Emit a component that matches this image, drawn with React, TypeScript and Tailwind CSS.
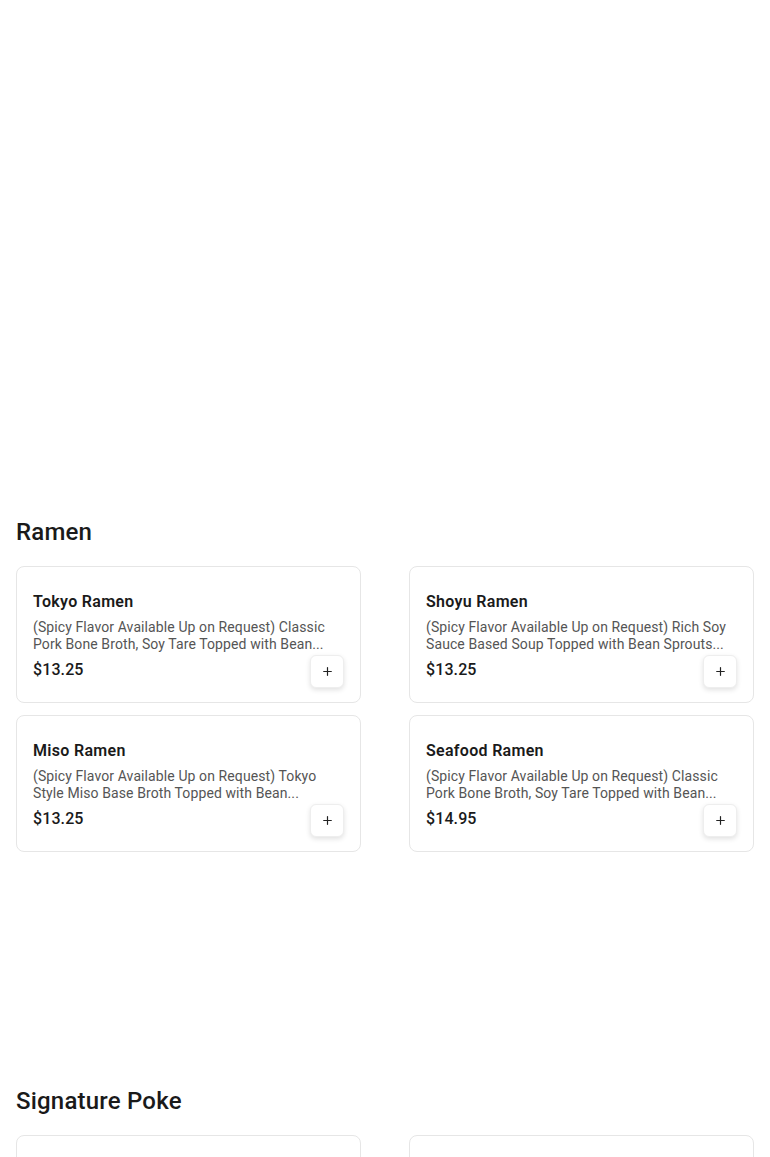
import { Plus } from 'lucide-react';

type Item = { name: string; desc: string; price: string };

const sections: { title: string; items: Item[] }[] = [
  {
    title: 'Ramen',
    items: [
      {
        name: 'Tokyo Ramen',
        desc: '(Spicy Flavor Available Up on Request) Classic Pork Bone Broth, Soy Tare Topped with Bean...',
        price: '$13.25',
      },
      {
        name: 'Shoyu Ramen',
        desc: '(Spicy Flavor Available Up on Request) Rich Soy Sauce Based Soup Topped with Bean Sprouts...',
        price: '$13.25',
      },
      {
        name: 'Miso Ramen',
        desc: '(Spicy Flavor Available Up on Request) Tokyo Style Miso Base Broth Topped with Bean...',
        price: '$13.25',
      },
      {
        name: 'Seafood Ramen',
        desc: '(Spicy Flavor Available Up on Request) Classic Pork Bone Broth, Soy Tare Topped with Bean...',
        price: '$14.95',
      },
    ],
  },
  {
    title: 'Signature Poke',
    items: [
      {
        name: 'Classic Poke',
        desc: 'Tuna, Salmon, Cucumber, Seaweed Salad, Masago and Green Onion with House...',
        price: '$14.95',
      },
      {
        name: 'Spicy Salmon Poke',
        desc: 'Salmon, Avocado, Cucumber, Crab Salad, Masago and Spicy Mayo',
        price: '$14.95',
      },
    ],
  },
];

const MenuCard = ({ item }: { item: Item }) => (
  <div className="border border-[#e6e6e6] rounded-lg bg-white px-4 pt-[25px] pb-[22px]">
    <div className="text-[16px] leading-[20px] font-semibold tracking-[0.3px] text-[#1a1a1a]">{item.name}</div>
    <p className="mt-[7px] text-[14px] leading-[17px] tracking-[0.1px] text-[#555] line-clamp-2">{item.desc}</p>
    <div className="mt-[7px] flex items-center justify-between h-[20px]">
      <span className="text-[16px] leading-[20px] font-medium tracking-[0.1px] text-[#1a1a1a]">{item.price}</span>
      <button className="w-[34px] h-[33px] mt-[2px] flex items-center justify-center rounded-md bg-white border border-[#eeeeee] shadow-[0_2px_5px_rgba(0,0,0,0.12)]">
        <Plus size={13} strokeWidth={2.2} className="text-[#222]" />
      </button>
    </div>
  </div>
);

const App = () => {
  return (
    <div
      className="min-h-screen bg-white px-4 pt-[516px]"
      style={{ fontFamily: 'Roboto, "Liberation Sans", sans-serif' }}
    >
      {sections.map((section, i) => (
        <section key={section.title} className={i > 0 ? 'mt-[233px]' : ''}>
          <h2 className="text-[24px] leading-[32px] font-medium tracking-[0.2px] text-[#1a1a1a] mb-[18px]">{section.title}</h2>
          <div className="grid grid-cols-2 gap-x-12 gap-y-3">
            {section.items.map(item => (
              <MenuCard key={item.name} item={item} />
            ))}
          </div>
        </section>
      ))}
    </div>
  );
};

export default App;
